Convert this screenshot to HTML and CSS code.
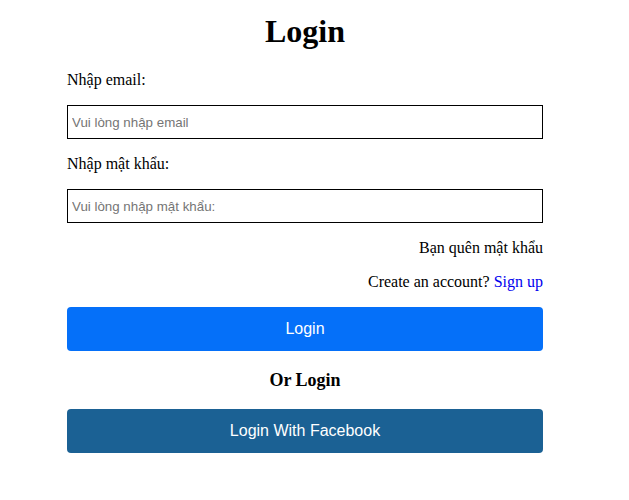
FILE: index.html
```html
<!DOCTYPE html>
<html lang="vi">
<head>
<meta charset="utf-8">
<title>Login</title>
<link rel="stylesheet" href="styles.css">
</head>
<body>
<div class="wrap">
  <h1 class="title">Login</h1>
  <form class="form">
    <label class="label" for="email">Nhập email:</label>
    <input class="field" id="email" type="email" placeholder="Vui lòng nhập email">
    <label class="label" for="pw">Nhập mật khẩu:</label>
    <input class="field" id="pw" type="password" placeholder="Vui lòng nhập mật khẩu:">
    <div class="right">Bạn quên mật khẩu</div>
    <div class="right">Create an account? <a class="link" href="#">Sign up</a></div>
    <button class="btn btn-primary" type="button">Login</button>
    <div class="or">Or Login</div>
    <button class="btn btn-fb" type="button">Login With Facebook</button>
  </form>
</div>
</body>
</html>
```
FILE: styles.css
```css
html, body {
  margin: 0;
  padding: 0;
  background: #fff;
}
body {
  font-family: "Liberation Serif", "Times New Roman", serif;
  font-size: 16px;
  color: #000;
}
.wrap {
  width: 476px;
  margin-left: 67px;
  padding-top: 13px;
}
.title {
  margin: 0 0 21px;
  font-size: 32px;
  font-weight: bold;
  text-align: center;
  line-height: 37px;
}
.form {
  display: flex;
  flex-direction: column;
  gap: 16px;
}
.label {
  display: block;
  line-height: 18px;
}
.field {
  box-sizing: border-box;
  width: 100%;
  height: 34px;
  margin: 0;
  border: 1px solid #000;
  border-radius: 0;
  padding: 0 4px;
  font-family: "Liberation Sans", Arial, sans-serif;
  font-size: 13.333px;
  outline: none;
}
.field::placeholder {
  color: #757575;
}
.right {
  text-align: right;
  line-height: 18px;
}
.link {
  color: #0000ee;
  text-decoration: none;
}
.btn {
  box-sizing: border-box;
  width: 100%;
  height: 44px;
  border: 0;
  border-radius: 4px;
  color: #fff;
  font-family: "Liberation Sans", Arial, sans-serif;
  font-size: 16px;
  margin: 0;
  padding: 0;
}
.btn-primary {
  background: #0570f9;
}
.btn-fb {
  background: #1b6194;
  margin-top: 2px;
}
.or {
  text-align: center;
  font-weight: bold;
  font-size: 18px;
  line-height: 21px;
  margin-top: 3px;
}
```
